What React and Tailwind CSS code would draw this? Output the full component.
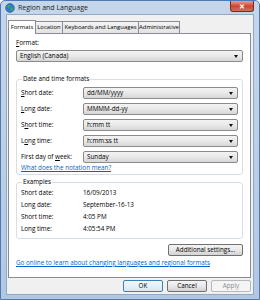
import React from 'react';

const Combo = ({ value, className = '' }) => (
  <div className={`flex h-[12px] items-center justify-between rounded-[2px] border border-[#8b8b8b] bg-gradient-to-b from-[#f3f3f3] via-[#e9e9e9] to-[#d6d6d6] pl-[3px] pr-[4px] ${className}`}>
    <span className="leading-none">{value}</span>
    <span className="h-0 w-0 border-x-[2px] border-t-[3px] border-x-transparent border-t-[#111]" />
  </div>
);

const Btn = ({ children, className = '', disabled, focused }) => (
  <div
    className={`flex h-[12px] items-center justify-center rounded-[2px] border leading-none ${
      disabled
        ? 'border-[#b5b9bd] bg-[#f4f4f4] text-[#8d8d8d]'
        : focused
        ? 'border-[#3c7fb1] bg-gradient-to-b from-[#f0f8fc] to-[#d8e8f3]'
        : 'border-[#707070] bg-gradient-to-b from-[#f4f4f4] via-[#e9e9e9] to-[#d2d2d2]'
    } ${className}`}
  >
    {children}
  </div>
);

const U = ({ children }) => <span className="underline underline-offset-[1px]">{children}</span>;

const Row = ({ label, value }) => (
  <div className="flex h-[12px] items-center">
    <div className="w-[62px]">{label}</div>
    <Combo value={value} className="flex-1" />
  </div>
);

const Example = ({ label, value }) => (
  <div className="flex h-[12px] items-center">
    <div className="w-[62px]">{label}</div>
    <div>{value}</div>
  </div>
);

const Globe = () => (
  <svg width="10" height="10" viewBox="0 0 10 10">
    <circle cx="5" cy="5" r="4.4" fill="#2f7fc8" />
    <path d="M2.2 3 Q3.5 1.6 5 2.4 L4.6 4.2 L3 4.8 Z M5.6 5 L7.8 4.6 L7.6 7 L6 8.2 Z" fill="#4dab44" />
    <circle cx="5" cy="5" r="4.4" fill="none" stroke="#1d5a96" strokeWidth="0.6" />
  </svg>
);

export default function App() {
  return (
    <div
      className="flex h-[300px] w-[260px] flex-col overflow-hidden rounded-t-[5px] border border-[#4f79b3] bg-gradient-to-b from-[#c6d6ea] via-[#bccfe6] to-[#b2c7e2] text-[6.3px] text-[#000]"
      style={{ fontFamily: '"Open Sans", "Noto Sans", sans-serif' }}
    >
      {/* title bar */}
      <div className="flex h-[13px] items-start pl-[4px] pr-[5px]">
        <div className="mt-[2px]">
          <Globe />
        </div>
        <div className="ml-[3px] mt-[2px] text-[7px] leading-[9px] text-[#1b1b1b]">Region and Language</div>
        <div className="flex-1" />
        <div className="flex h-[11px] w-[24px] items-center justify-center rounded-b-[3px] border border-t-0 border-[#7a2a22] bg-gradient-to-b from-[#e8a093] via-[#c9453a] to-[#d0705e]">
          <span className="text-[7px] font-bold leading-none text-white">✕</span>
        </div>
      </div>

      {/* dialog body */}
      <div className="mx-[5px] mb-[4px] flex flex-1 flex-col border border-[#90a8c8] bg-[#f0f0f0] pl-[1px] pr-[2px] pt-[4px]">
        {/* tabs */}
        <div className="flex h-[14px] items-end text-[5.9px]">
          <div className="relative z-10 -mb-px flex h-[14px] w-[28px] items-start justify-center border border-b-0 border-[#898c95] bg-white pt-[2px]">
            Formats
          </div>
          <div className="flex h-[12px] w-[27px] items-start justify-center border border-l-0 border-b-0 border-[#898c95] bg-gradient-to-b from-[#f3f3f3] to-[#e3e3e3] pt-[1px]">
            Location
          </div>
          <div className="flex h-[12px] w-[76px] items-start justify-center whitespace-nowrap border border-l-0 border-b-0 border-[#898c95] bg-gradient-to-b from-[#f3f3f3] to-[#e3e3e3] pt-[1px]">
            Keyboards and Languages
          </div>
          <div className="flex h-[12px] w-[41px] items-start justify-center border border-l-0 border-b-0 border-[#898c95] bg-gradient-to-b from-[#f3f3f3] to-[#e3e3e3] pt-[1px]">
            Administrative
          </div>
        </div>

        {/* panel */}
        <div className="flex h-[245px] flex-col border border-[#898c95] bg-white px-[7px]">
          <div className="mt-[5px] leading-[8px]">
            <U>F</U>ormat:
          </div>
          <Combo value="English (Canada)" className="mt-[3px]" />

          <fieldset className="mt-[13px] rounded-[3px] border border-[#d5dfe5] px-[4px] pb-[2px]">
            <legend className="ml-[1px] px-[1px] leading-[8px]">Date and time formats</legend>
            <div className="mt-[4px] flex flex-col gap-[4px]">
              <Row label={<><U>S</U>hort date:</>} value="dd/MM/yyyy" />
              <Row label={<><U>L</U>ong date:</>} value="MMMM-dd-yy" />
              <Row label={<>S<U>h</U>ort time:</>} value="h:mm tt" />
              <Row label={<>L<U>o</U>ng time:</>} value="h:mm:ss tt" />
              <Row label={<>First day of <U>w</U>eek:</>} value="Sunday" />
            </div>
            <div className="mt-[1px] leading-[8px] text-[#0066cc] underline">What does the notation mean?</div>
          </fieldset>

          <fieldset className="mt-[3px] rounded-[3px] border border-[#d5dfe5] px-[4px] pb-[3px]">
            <legend className="ml-[1px] px-[1px] leading-[8px]">Examples</legend>
            <div className="mt-[1px] flex flex-col">
              <Example label="Short date:" value="16/09/2013" />
              <Example label="Long date:" value="September-16-13" />
              <Example label="Short time:" value="4:05 PM" />
              <Example label="Long time:" value="4:05:54 PM" />
            </div>
          </fieldset>

          <div className="mt-[5px] flex justify-end">
            <Btn className="w-[75px]">
              Additional settings...
            </Btn>
          </div>
          <div className="mt-[3px] whitespace-nowrap leading-[8px] text-[#0066cc] underline">
            Go online to learn about changing languages and regional formats
          </div>
        </div>

        {/* buttons */}
        <div className="mt-[2px] flex justify-end gap-[4px]">
          <Btn focused className="w-[40px]">OK</Btn>
          <Btn className="w-[40px]">Cancel</Btn>
          <Btn disabled className="w-[40px]">Apply</Btn>
        </div>
      </div>
    </div>
  );
}
